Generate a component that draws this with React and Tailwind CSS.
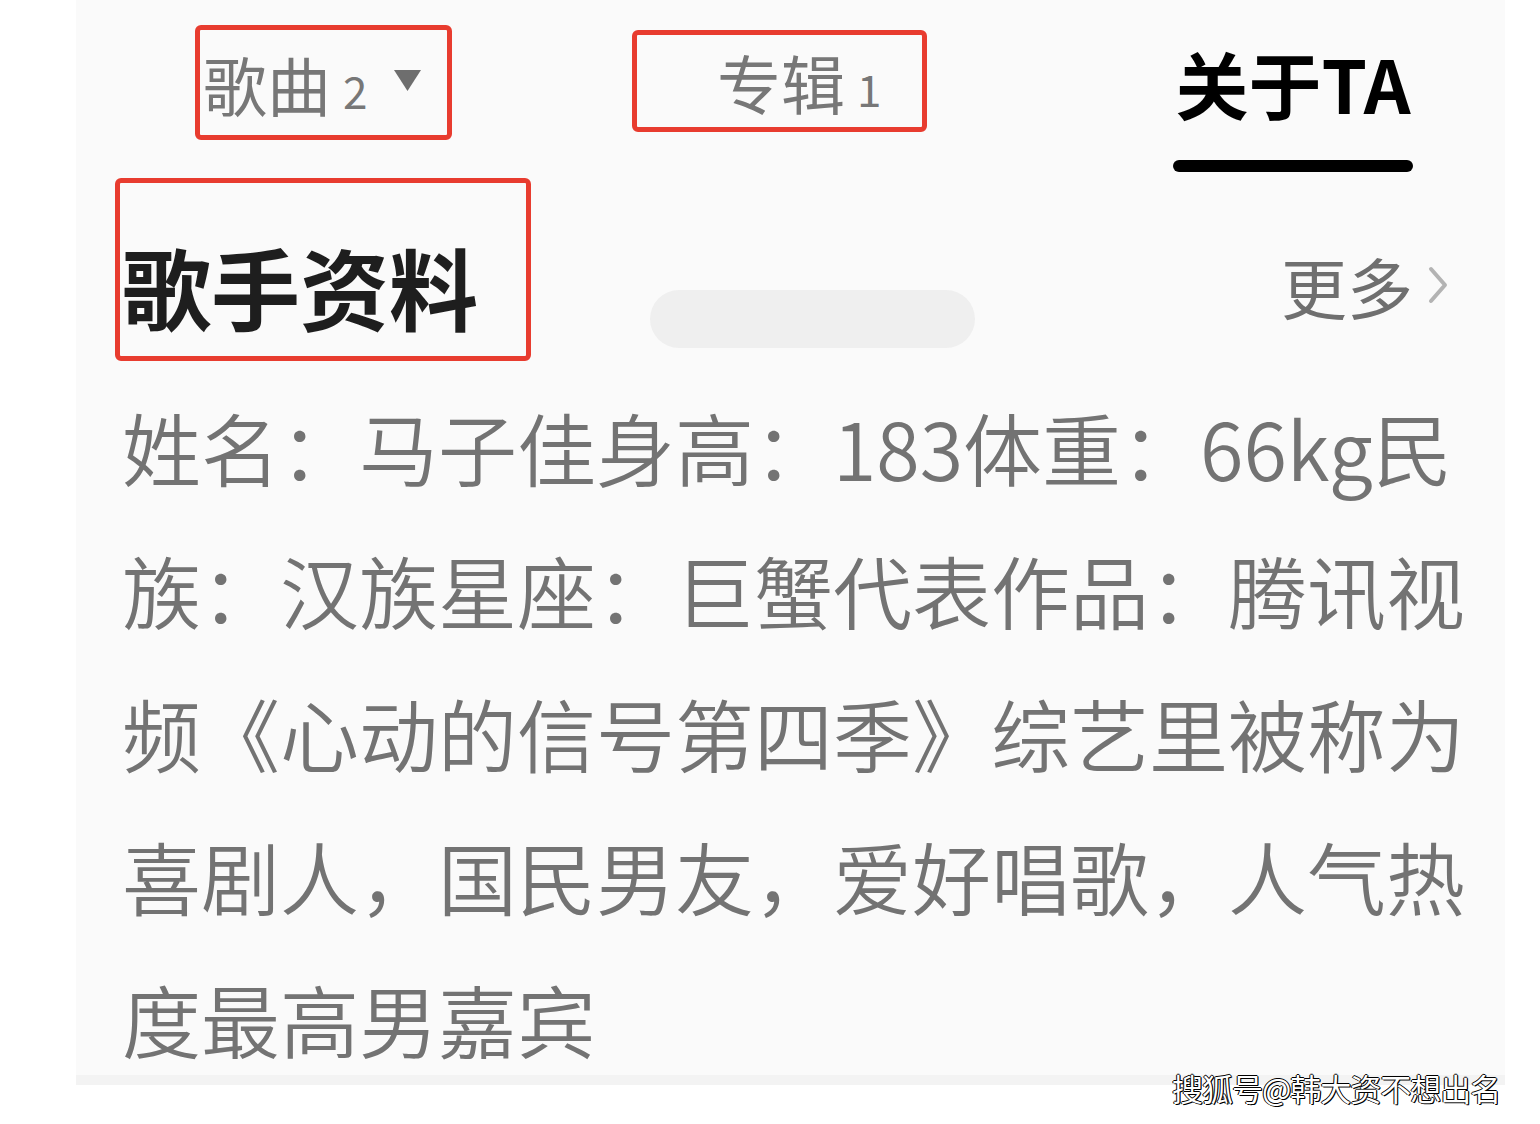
import React from 'react';

const cjk = { fontFamily: '"Noto Sans CJK SC", "Noto Sans", sans-serif' };

const lines = [
  '姓名：马子佳身高：183体重：66kg民',
  '族：汉族星座：巨蟹代表作品：腾讯视',
  '频《心动的信号第四季》综艺里被称为',
  '喜剧人，国民男友，爱好唱歌，人气热',
  '度最高男嘉宾',
];

const App = () => {
  return (
    <div className="relative w-full h-[1124px] bg-white overflow-hidden" style={cjk}>
      <div className="ml-[76px] w-[1429px] h-[1085px] bg-[#fafafa] border-b-[10px] border-[#f3f3f3]">
        {/* tabs */}
        <div className="flex items-start h-[178px] pt-[25px]">
          <div className="ml-[119px] w-[257px] h-[115px] border-[5px] border-[#e83c2f] rounded-[6px] flex items-center pl-[3px]">
            <span className="text-[64px] leading-none text-[#777]">歌曲</span>
            <span className="text-[44px] leading-none text-[#777] ml-[12px] mt-[14px]">2</span>
            <svg className="ml-[26px] -mt-[4px]" width="29" height="25" viewBox="0 0 29 25">
              <path d="M1 2h27L14.5 23z" fill="#6e6e6e" />
            </svg>
          </div>
          <div className="ml-[180px] mt-[5px] w-[295px] h-[102px] border-[5px] border-[#e83c2f] rounded-[6px] flex items-center pl-[80px]">
            <span className="text-[64px] leading-none text-[#777]">专辑</span>
            <span className="text-[44px] leading-none text-[#777] ml-[12px] mt-[14px]">1</span>
          </div>
          <div className="ml-[246px] mt-[21px] flex flex-col items-center w-[240px]">
            <span className="text-[73px] leading-none font-bold text-black">关于TA</span>
            <div className="mt-[41px] w-[240px] h-[12px] rounded-full bg-black" />
          </div>
        </div>

        {/* section header */}
        <div className="flex items-start">
          <div className="ml-[39px] w-[416px] h-[183px] border-[5px] border-[#e83c2f] rounded-[6px] pl-[2px] pt-[58px]">
            <span className="text-[89px] leading-none font-bold text-[#1e1e1e]">歌手资料</span>
          </div>
          <div className="ml-[119px] mt-[112px] w-[325px] h-[58px] rounded-full bg-[#efefef]" />
          <div className="ml-auto mr-[56px] mt-[74px] flex items-center">
            <span className="text-[66px] leading-none text-[#6f6f6f]">更多</span>
            <svg className="ml-[14px]" width="22" height="40" viewBox="0 0 22 40">
              <path d="M4 4l14 16L4 36" fill="none" stroke="#b3b3b3" strokeWidth="4" strokeLinecap="round" strokeLinejoin="round" />
            </svg>
          </div>
        </div>

        {/* body */}
        <div className="ml-[46px] mt-[14px] text-[79px] leading-[143px] font-[350] text-[#737373]">
          {lines.map((l) => (
            <div key={l} className="whitespace-nowrap">{l}</div>
          ))}
        </div>
      </div>

      <div className="absolute left-[1172px] top-[1072px] text-[31px] leading-none text-white tracking-[-1px] [text-shadow:1px_1px_0_#000,-1px_0_0_#000,0_-1px_0_#000,1px_0_0_#000]">
        搜狐号@韩大资不想出名
      </div>
    </div>
  );
};

export default App;
